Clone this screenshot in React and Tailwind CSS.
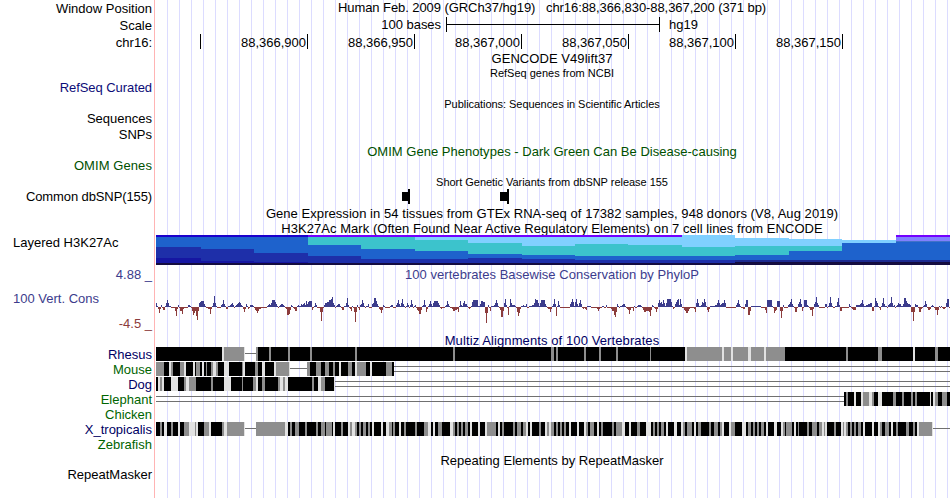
import React from "react";

const LEFT = 156;
const RIGHT = 950;

const ticks = [
  "88,366,900",
  "88,366,950",
  "88,367,000",
  "88,367,050",
  "88,367,100",
  "88,367,150",
];

// x, top, then [color, bottom] layers
const histone = [
  [156, 0, [["#1c00cc", 2], ["#1e62cc", 12], ["#1e2fa9", 23], ["#1616a2", 28]]],
  [201, 0, [["#1c00cc", 2], ["#1e62cc", 14], ["#1e2fa9", 26], ["#1616a2", 28]]],
  [254, 0, [["#1c00cc", 2], ["#1e62cc", 18], ["#1e2fa9", 27], ["#1616a2", 28]]],
  [308, 0, [["#7300ff", 2], ["#3cc3cc", 10], ["#1e62cc", 21], ["#1e2fa9", 28]]],
  [361, 0, [["#7300ff", 2], ["#3cc3cc", 14], ["#1e62cc", 24], ["#1e2fa9", 28]]],
  [415, 0, [["#7300ff", 2], ["#80d0ff", 5], ["#3cc3cc", 16], ["#1e62cc", 24], ["#1e2fa9", 28]]],
  [468, 0, [["#7300ff", 2], ["#80d0ff", 8], ["#3cc3cc", 19], ["#1e62cc", 23], ["#1e2fa9", 28]]],
  [522, 0, [["#7300ff", 2], ["#80d0ff", 11], ["#3cc3cc", 20], ["#1e62cc", 24], ["#1e2fa9", 28]]],
  [575, 0, [["#7300ff", 2], ["#80d0ff", 9], ["#3cc3cc", 21], ["#1e62cc", 25], ["#1e2fa9", 28]]],
  [628, 0, [["#7300ff", 2], ["#80d0ff", 10], ["#3cc3cc", 21], ["#1e62cc", 25], ["#1e2fa9", 28]]],
  [682, 0, [["#80d0ff", 12], ["#3cc3cc", 21], ["#1e62cc", 25], ["#1e2fa9", 28]]],
  [735, 3, [["#80d0ff", 11], ["#3cc3cc", 20], ["#1e62cc", 25], ["#1c2a90", 27]]],
  [789, 4, [["#80d0ff", 11], ["#3cc3cc", 16], ["#1e62cc", 25], ["#1c2a90", 27]]],
  [842, 5, [["#80d0ff", 8], ["#1e62cc", 25], ["#1c2a90", 27]]],
  [896, 0, [["#7300ff", 2], ["#8080ff", 6], ["#4272c8", 7], ["#1e62cc", 25], ["#1c2a90", 27]]],
];

// conservation scores, one number per pixel from the given x
const phyloP = `
156:4,1,-2,-6,-2,2,-1,-3,-3,1,4,7,4,1,1|175:-4,-9,-2,2,-1,-4,-4,-7,-2|188:2,2,1|192:-4,-8,-6,-4,-9,-13,-4,4,5,6,6,6,3,1
207:-1,-2,-2,-7,-2,1,4,11,4,1|221:2,3,7,3,1,-2,-2,1,1,2,3,4,2|235:1,2,3,4,5,4,2,1,-2,-5,-2,3,1,-2,-1,2,2,2,1,-1,-3,-4,-6,-4,-2,-2
267:1,2,3,2,4,7,7,7,5,3,1,-1,1,2,3,3,2,1|286:-2,-8,-8,-7,-3,2,1,-1,-2,-4,-4,1,2,1,1,3,2,3,4,2,6,3,5,6,6,6,-3,-1,1,4,2,-1,-1,-1,-5,-14,-5
324:2,4,4,5,5,7,7,8,10,4,2,-1,1,2,3,3,1,-1,-3,-3,1,1,4,9,2,-1,-2,-4,1,-1,-5,-15,-5,2,-1,-3,2,3,7,4,1,-1,1,1,3,-1,-1,-1,3,4,9,9,6,3,1,-2,-3,-6,-3,2,1
390:1,2,2,-1,-1,-1,2,4,7,3,1,4,8,3,1,-1,1,4,2,-1,2,7,3,-1,1,2,-1,-3,-4,-7,-7,-3,1,2,7,2,-5,-2,1,3,6,3,1,4,6,6,6,6,4,2,-1,-2,-1
445:1,2,6,3,1,-1,-1,-2,-4,-4,-3,-3,-2,-5,1,6,2,1,4,6,3,3,1,-1,-2,-1,1,5,7,7,7,7,7,1,1,3,6,6,5,5,-6,-16,-6,2,-1,-4,1,1,1,2,4,7,4,1,-1,-3,-10,-10,-4,4,8,2,-1,-8,1,8,4,2,2,2,1
516:-1,-5,-9,-6,-2,1,1,2,1,1,3,-1,-1,1,1,1,2,2,4,8,7,7,4,1,4,7,7,7,7,3,1,-1,-2,-2,-5,-2,1,3,8,3,-9,1,6,2,-1,-1
570:3,5,8,5,1,5,8,3,1,4,7,3,-1,-2,-1,-2,-3,1,1,1,1,-1,-1|597:-2,-4,-2|602:1,1|606:2|611:-2,-4,-4,-8,-10,-5,3,1,-1,1,1,2,3,3,1,-1,-2,-3,-7,-3,-1,-1,-4,1
637:1,2,2,2,1|643:-3,-5,-5,-4,-4,-4,-5,-9,-3,2,1,-1,-2,-5,-2,4,7,4,5,3,7,4,1,4,8,8,8,8,5,1,-2,-1,3,5,7,8,2,8,3
684:-3,-4,-6,-6,-4,-2|694:-2,-5,4,8,4,1,1,2,5,4,8,5,1,-3,-5,-2,1,1,1,1,1,2,2,4,7,4,2,3,4,4,7,4|736:2,4,7,3,1|743:-2,-2,3,7,7,-8,-8,-4,1,1,1,1,1,1,1,1,1,1|765:-3,-6,7,7,7,7,7,1,-1,-6,-4,-3,6,6,6,-4,-11,-4,2
788:2,3,5,8,3,1,-1,-5,-5,-1,3,5,8,3,-4,-1,7,7,7,2,1,-1,-3,-3,-9,-2,3,5,10,4,2|825:3,3,-1,1,4,10,4,1,-1,-1,1,1,5,9,2,-4,-4,-1|849:3,1,-1,-2,-3,-3,-3
856:2,2,2,2,3,4,7,3,1,1,2,2,3,3,4,4,-4,-4,1,9,6,4,1,-1,-3,1,4,9,3,1,1,-1,2,3,4,10,4,1,2,-1,1,2,4,3,3,1,1,3,9,9,6,4,3,3,2,-5,-5,-14,-5,3,2,2,-1,-5,-5,-2
923:1,2,6,3,-1,-3,-3,-2,1,2,1,-1,-3,-3,-8,-3,1|941:1|943:-2,-2,-1,4,8,8`;

// start x + shade: K aligned, g weaker, w weakest, "-" single gap, "=" double gap
const alignments = {
  rhesus:
    "156K222w224g244w245-256g258K269g271K288g290K310g312K355g357K453g455K551g554K556g558K584g586K599g601K616g618K650g651K685w687g722w724g731w733g748w751g764w766g785K846g848K878g882K913w915K935g938K",
  mouse:
    "156g164K169w171g173K180g184w186K193w195K196g200K202w204K206g207K211g213w216g218K224w229K242g243w245K255g258K262w265K274w276g289w290-307g310K316g321K325g329K333g335K339w341K348g352K355w357g366K370w372K386g392K394=",
  dog: "156K158w160g162w164K171w178K184g186w189g196K211g213K224w231K242g243K253g256w258K262g265K278g280w283g285w288K312g314K318w321g325K334w335=",
  elephant:
    "156=844K846g848K854w856K861w863g869w872g874K878w882K893g896K902g904K911g913K915g917K930w931K933w935g938K942g947K",
  xenopus:
    "156K160g162K164w167K171g173K178w180K184g189w195g196w198K204g209w211K222g224w227g244w245-256g285w288K290g292K295g299K305g307K316g318K321g323g325K326g332K333w335K341g343K348w350g352w355g357K359g361K363g366K368g370K372w374K381w383K386w389g392K393g395K399w401K404g406K415g417K424g428w431K433w435K438g442K450w453g455K457g459K461g463K465g468K470w472K478w480K485w487g496K498w500K502g504K513g515K517g521K523g526w528K530w532K539g541K545w547g549w551g554K556g558K560g562K564g566K569w571K577w579K584w586g588K590g594K597w599K601g603K612g614K616g622w625K629w631K637g640K646w651K653g655K657g659K661g664K666w668K674w677K681w683g685K687g692K694w696K698g701K709g711K714g718K720g722w724K729w731g735K742w746K748g751K753g755K757g759K761g764K766w768K774w777K781w783g785K786g792K794w796K798g799K807g809K812g817K819g822w824g825w827K834g836K841w843g844w846g848K850g852K854g856K858g861K863w865K872w874K878w880g882K885g889K891w893K896g898K906g909K913g915K917w919g932w933-",
};

const shades = { K: "#000000", g: "#8e8e8e", w: "#e2e2e2" };

function Label({ className = "", children }) {
  return (
    <div className={`flex shrink-0 items-center justify-end pr-0.5 ${className}`}>
      {children}
    </div>
  );
}

function Title({ className = "", children }) {
  return (
    <div className={`flex shrink-0 items-center justify-center pr-0.5 ${className}`}>
      {children}
    </div>
  );
}

function Ruler() {
  return (
    <div className="flex h-[17px] shrink-0 items-start">
      <div className="h-[15px] w-[45px] border-r border-black" />
      {ticks.map((t) => (
        <div
          key={t}
          className="flex h-[15px] w-[107px] items-start justify-end border-r border-black pt-px pr-px"
        >
          {t}
        </div>
      ))}
    </div>
  );
}

function ScaleBar() {
  return (
    <div className="flex h-[17px] shrink-0 items-start">
      <div className="w-[286px] pr-px text-right tracking-[-0.04px]">100 bases</div>
      <div className="ml-1 flex h-[15px] w-[214px] items-center border-x border-black">
        <div className="h-px w-full bg-black" />
      </div>
      <div className="ml-[9px]">hg19</div>
    </div>
  );
}

function Variants() {
  return (
    <svg width="794" height="15" className="block shrink-0" shapeRendering="crispEdges">
      <rect x="246" y="3" width="6" height="9" />
      <rect x="252" y="0" width="2" height="15" />
      <rect x="344" y="3" width="7" height="9" />
      <rect x="351" y="0" width="2" height="15" />
    </svg>
  );
}

function HistoneMarks() {
  return (
    <svg width="794" height="30" className="block shrink-0" shapeRendering="crispEdges">
      {histone.map(([x, top, layers], i) => {
        const end = i + 1 < histone.length ? histone[i + 1][0] : RIGHT;
        return layers.map(([fill, bottom], j) => {
          const y = j === 0 ? top : layers[j - 1][1];
          return (
            <rect
              key={`${x}-${j}`}
              x={x - LEFT}
              y={y}
              width={end - x}
              height={bottom - y}
              fill={fill}
            />
          );
        });
      })}
      <rect x="0" y="28" width="794" height="2" fill="#140c40" />
      <rect x="579" y="27" width="215" height="1" fill="#140c40" />
    </svg>
  );
}

function Conservation() {
  const scores = new Array(RIGHT - LEFT).fill(-1);
  phyloP
    .trim()
    .split(/[|\n]/)
    .forEach((run) => {
      const [x, values] = run.split(":");
      values.split(",").forEach((v, i) => {
        const at = Number(x) - LEFT + i;
        if (at < scores.length) scores[at] = Number(v);
      });
    });

  return (
    <svg width="794" height="51" className="block shrink-0" shapeRendering="crispEdges">
      {scores.map((s, i) => (
        <rect
          key={i}
          x={i}
          y={s > 0 ? 25 - s : 25}
          width="1"
          height={Math.abs(s)}
          fill={s > 0 ? "#3c3c8c" : "#8c3c3c"}
        />
      ))}
    </svg>
  );
}

function Alignment({ data }) {
  const runs = [...data.matchAll(/(\d+)([Kgw=-])/g)].map((m) => [Number(m[1]), m[2]]);
  return (
    <svg width="794" height="15" className="block shrink-0" shapeRendering="crispEdges">
      {runs.map(([x, kind], i) => {
        const width = (i + 1 < runs.length ? runs[i + 1][0] : RIGHT) - x;
        const left = x - LEFT;
        if (kind === "-")
          return <rect key={x} x={left} y="6" width={width} height="1" fill="#707070" />;
        if (kind === "=")
          return (
            <g key={x} fill="#707070">
              <rect x={left} y="4" width={width} height="1" />
              <rect x={left} y="9" width={width} height="1" />
            </g>
          );
        return (
          <rect key={x} x={left} y="0" width={width} height="14" fill={shades[kind]} />
        );
      })}
    </svg>
  );
}

export default function App() {
  return (
    <div className="flex h-[498px] w-[950px] overflow-hidden bg-white font-['Liberation_Sans',Arial,sans-serif] text-[13px] leading-[15px] whitespace-pre text-black antialiased">
      {/* track names */}
      <div className="flex w-[155px] shrink-0 flex-col border-r border-[#ffb4b4]">
        <Label className="h-[17px]">Window Position</Label>
        <Label className="h-[17px]">Scale</Label>
        <Label className="h-[17px]">chr16:</Label>
        <Label className="mt-7 h-4 tracking-[-0.07px] text-[#0c0c78]">RefSeq Curated</Label>
        <Label className="mt-[15px] h-4">Sequences</Label>
        <Label className="h-4">SNPs</Label>
        <Label className="mt-[15px] h-4 tracking-[0.08px] text-[#005000]">OMIM Genes</Label>
        <Label className="mt-[15px] h-4 tracking-[-0.11px]">Common dbSNP(155)</Label>
        <div className="mt-[30px] flex h-4 items-center pl-[13px]">Layered H3K27Ac</div>
        <Label className="mt-4 h-4 text-[#3c3c8c]">4.88 _</Label>
        <div className="mt-2 flex h-4 items-center pl-[13px] text-[#3c3c8c]">
          100 Vert. Cons
        </div>
        <Label className="mt-[9px] h-4 text-[#8c3c3c]">-4.5 _</Label>
        <Label className="mt-4 h-[15px] text-[#000064]">Rhesus</Label>
        <Label className="h-[15px] text-[#006400]">Mouse</Label>
        <Label className="h-[15px] text-[#000064]">Dog</Label>
        <Label className="h-[15px] text-[#006400]">Elephant</Label>
        <Label className="h-[15px] text-[#006400]">Chicken</Label>
        <Label className="h-[15px] text-[#000064]">X_tropicalis</Label>
        <Label className="h-[15px] text-[#006400]">Zebrafish</Label>
        <Label className="mt-[14px] h-4">RepeatMasker</Label>
      </div>

      {/* tracks */}
      <div className="ml-px flex w-[794px] shrink-0 flex-col bg-[repeating-linear-gradient(to_right,transparent_0px,transparent_11px,#dcdcff_11px,#dcdcff_12px)]">
        <Title className="h-[17px] items-start pb-0.5 tracking-[-0.07px]">
          {"Human Feb. 2009 (GRCh37/hg19)   chr16:88,366,830-88,367,200 (371 bp)"}
        </Title>
        <ScaleBar />
        <Ruler />
        <Title className="h-[15px] tracking-[0.06px]">GENCODE V49lift37</Title>
        <Title className="h-[15px] text-[11px]">RefSeq genes from NCBI</Title>
        <Title className="mt-4 h-[15px] text-[11px] tracking-[-0.05px]">
          Publications: Sequences in Scientific Articles
        </Title>
        <Title className="mt-[31px] h-4 tracking-[0.02px] text-[#005000]">
          OMIM Gene Phenotypes - Dark Green Can Be Disease-causing
        </Title>
        <Title className="mt-4 h-[14px] text-[11px] tracking-[-0.03px]">
          Short Genetic Variants from dbSNP release 155
        </Title>
        <Variants />
        <Title className="mt-px h-4 tracking-[0.055px]">
          Gene Expression in 54 tissues from GTEx RNA-seq of 17382 samples, 948 donors (V8, Aug 2019)
        </Title>
        <Title className="h-[14px] tracking-[0.045px]">
          H3K27Ac Mark (Often Found Near Active Regulatory Elements) on 7 cell lines from ENCODE
        </Title>
        <HistoneMarks />
        <Title className="mt-px h-4 tracking-[0.04px] text-[#3c3c8c]">
          100 vertebrates Basewise Conservation by PhyloP
        </Title>
        <Conservation />
        <Title className="h-[14px] tracking-[0.1px] text-[#000064]">
          Multiz Alignments of 100 Vertebrates
        </Title>
        <Alignment data={alignments.rhesus} />
        <Alignment data={alignments.mouse} />
        <Alignment data={alignments.dog} />
        <Alignment data={alignments.elephant} />
        <div className="h-[15px] shrink-0" />
        <Alignment data={alignments.xenopus} />
        <Title className="mt-[15px] h-4 tracking-[0.02px]">
          Repeating Elements by RepeatMasker
        </Title>
      </div>
    </div>
  );
}
